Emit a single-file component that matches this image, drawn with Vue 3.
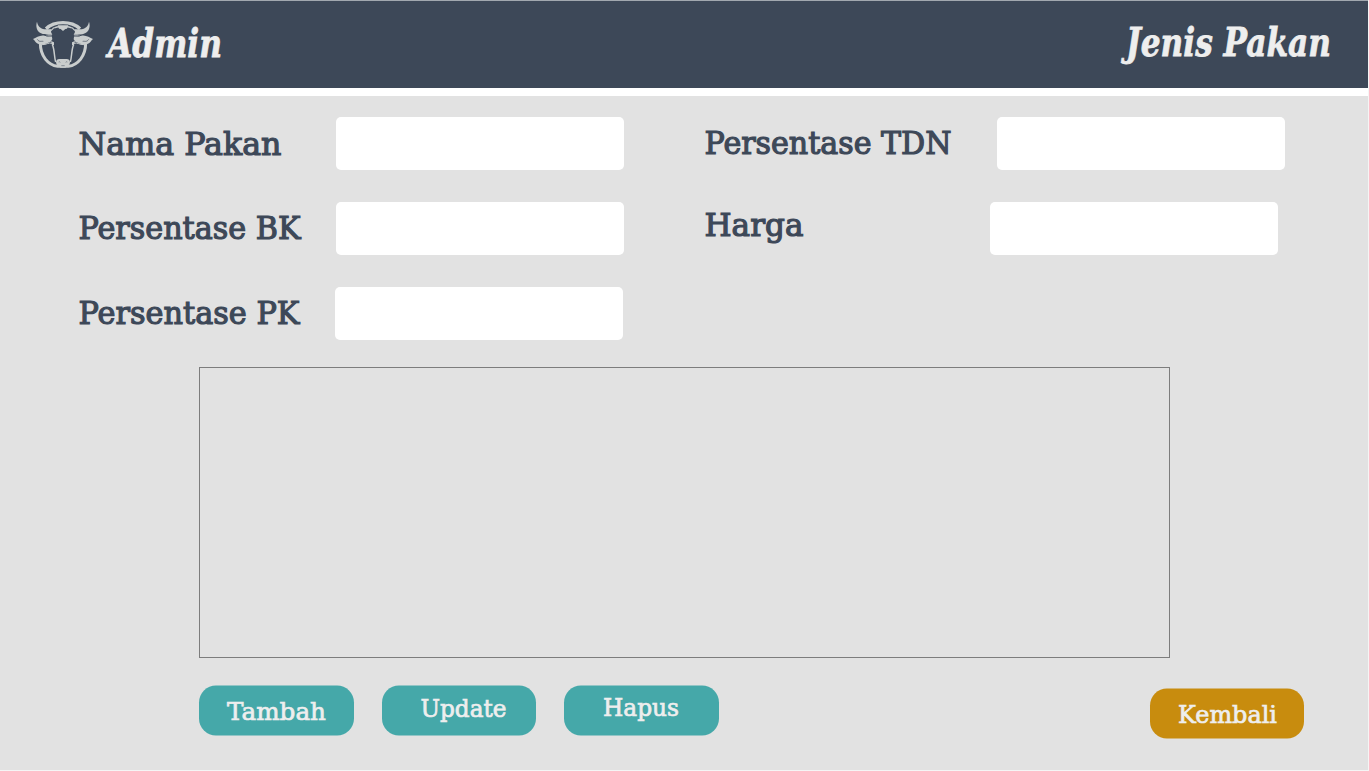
<script setup>
const columns = [
  {
    side: 'left',
    fields: [
      { id: 'nama', label: 'Nama Pakan', width: 203, baseline: 37.5, input: 257 },
      { id: 'bk', label: 'Persentase BK', width: 222, baseline: 37, input: 257 },
      { id: 'pk', label: 'Persentase PK', width: 221, baseline: 37, input: 256 },
    ],
  },
  {
    side: 'right',
    fields: [
      { id: 'tdn', label: 'Persentase TDN', width: 247, baseline: 37, input: 292 },
      { id: 'harga', label: 'Harga', width: 99, baseline: 34, input: 285 },
    ],
  },
]
const actions = [
  { label: 'Tambah', x: 28, y: 34, width: 99 },
  { label: 'Update', x: 38.5, y: 31, width: 86 },
  { label: 'Hapus', x: 39, y: 30, width: 76 },
]
</script>

<template>
  <div class="page">
    <header class="bar">
      <div class="brand">
        <svg class="logo" width="80" height="64" viewBox="0 0 240 192" aria-hidden="true">
          <g fill="none" stroke="#c9cdcd">
            <path d="M66 50 C92 26 142 26 168 50" stroke-width="10" />
            <path d="M49 94 C49 132 72 159 101 163 L133 163 C162 159 185 132 185 94" stroke-width="9" />
            <path d="M85 98 C92 113 90 132 95 150 M149 98 C142 113 144 132 139 150" stroke-width="4.5" />
            <path d="M78 55 C87 57 83 47 93 47 C102 43 103 43 108 45 M156 55 C147 57 151 47 141 47 C132 43 131 43 126 45" stroke-width="4" />
            <path d="M54 98 C67 99 74 90 84 94 M180 98 C167 99 160 90 150 94" stroke-width="3" />
          </g>
          <g fill="#c9cdcd">
            <path d="M39 29 C41 42 50 50 61 52 L83 52 L81 60 L85 68 C72 68 61 69 51 64 C39 58 34 44 39 29Z" />
            <path d="M195 29 C193 42 184 50 173 52 L151 52 L153 60 L149 68 C162 68 173 69 183 64 C195 58 200 44 195 29Z" />
            <path d="M27 81 C37 77 48 68 62 71 L83 68 L85 82 L80 89 C67 94 60 99 48 97 C36 95 34 87 27 81Z" />
            <path d="M207 81 C197 77 186 68 172 71 L151 68 L149 82 L154 89 C167 94 174 99 186 97 C198 95 200 87 207 81Z" />
            <path d="M101 40 H133 L129 50 L124 51 L117 57 L110 51 L105 50Z" />
            <path d="M81 87 L90 91 L90 99 L84 99Z M153 87 L144 91 L144 99 L150 99Z" />
            <path d="M96 151 Q97 141 106 141 H128 Q137 141 138 151 Q138 158 132 161 L124 167 H110 L102 161 Q96 158 96 151Z" />
          </g>
          <g fill="none" stroke="#3d4858">
            <path d="M62 69 C70 75 75 71 84 72 M172 69 C164 75 159 71 150 72" stroke-width="3" />
            <path d="M40 82 C46 91 50 87 58 88 M194 82 C188 91 184 87 176 88" stroke-width="2" />
            <path d="M104 150 Q106 148 109 151 M130 150 Q128 148 125 151 M112 161 H122" stroke-width="1.5" />
          </g>
        </svg>
        <svg class="script" width="122" height="64">
          <text x="0" y="45" textLength="114" lengthAdjust="spacingAndGlyphs">Admin</text>
        </svg>
      </div>
      <svg class="script" width="222" height="64">
        <text x="8" y="44" textLength="205" lengthAdjust="spacingAndGlyphs">Jenis Pakan</text>
      </svg>
    </header>

    <main class="content">
      <form class="fields" @submit.prevent>
        <div v-for="col in columns" :key="col.side" :class="['column', col.side]">
          <div v-for="f in col.fields" :key="f.id" class="field">
            <label :for="f.id" :style="{ width: f.input + 'px' }">
              <svg class="slab" :width="f.width" height="53">
                <text x="-0.5" :y="f.baseline" :textLength="f.width" lengthAdjust="spacingAndGlyphs">{{ f.label }}</text>
              </svg>
            </label>
            <input :id="f.id" type="text" />
          </div>
        </div>
      </form>

      <section class="table"></section>

      <footer class="actions">
        <button v-for="a in actions" :key="a.label" class="btn">
          <svg class="slab small" width="154" height="50">
            <text :x="a.x" :y="a.y" :textLength="a.width" lengthAdjust="spacingAndGlyphs">{{ a.label }}</text>
          </svg>
        </button>
        <button class="btn back">
          <svg class="slab small" width="154" height="50">
            <text x="28" y="34" textLength="99" lengthAdjust="spacingAndGlyphs">Kembali</text>
          </svg>
        </button>
      </footer>
    </main>
  </div>
</template>

<style>
body {
  background: #f5f5f5;
  overflow: hidden;
}
</style>

<style scoped>
.page {
  width: 1368px;
  height: 770px;
  background: #e2e2e2;
}
svg {
  display: block;
  overflow: visible;
}
text {
  font-family: 'DejaVu Serif', serif;
}
.bar {
  box-sizing: border-box;
  height: 96px;
  padding: 11px 28px 0 24px;
  display: flex;
  justify-content: space-between;
  background: #3d4858;
  border-top: 1px solid #a2a8af;
  border-bottom: 8px solid #fff;
}
.brand {
  display: flex;
  gap: 4px;
}
.script text {
  font-size: 40px;
  font-weight: bold;
  font-style: italic;
  fill: #eee;
  stroke: #eee;
  stroke-width: 0.8px;
}
.slab text {
  font-size: 31.5px;
  fill: #3d4858;
  stroke: #3d4858;
  stroke-width: 1.2px;
}
.slab.small text {
  font-size: 24px;
  fill: #eee;
  stroke: #eee;
  stroke-width: 0.7px;
}
.content {
  padding-top: 21px;
}
.fields {
  display: flex;
  height: 250px;
  padding-left: 79px;
}
.column {
  display: flex;
  flex-direction: column;
  gap: 32px;
}
.column.left {
  width: 626px;
}
.field {
  display: flex;
  height: 53px;
}
.field input {
  box-sizing: border-box;
  width: 288px;
  height: 53px;
  border: 0;
  border-radius: 5px;
  background: #fff;
  outline: none;
}
.table {
  box-sizing: border-box;
  width: 971px;
  height: 291px;
  margin-left: 199px;
  border: 1px solid #7d7d7d;
}
.actions {
  display: flex;
  gap: 28px;
  padding: 27px 64px 0 199px;
  transform: translateY(0.5px);
}
.btn {
  width: 154.5px;
  height: 50px;
  padding: 0;
  border: 0;
  border-radius: 17px;
  background: #45a8a9;
}
.btn.back {
  margin: 3px 0 0 auto;
  background: #c88c0e;
}
</style>
